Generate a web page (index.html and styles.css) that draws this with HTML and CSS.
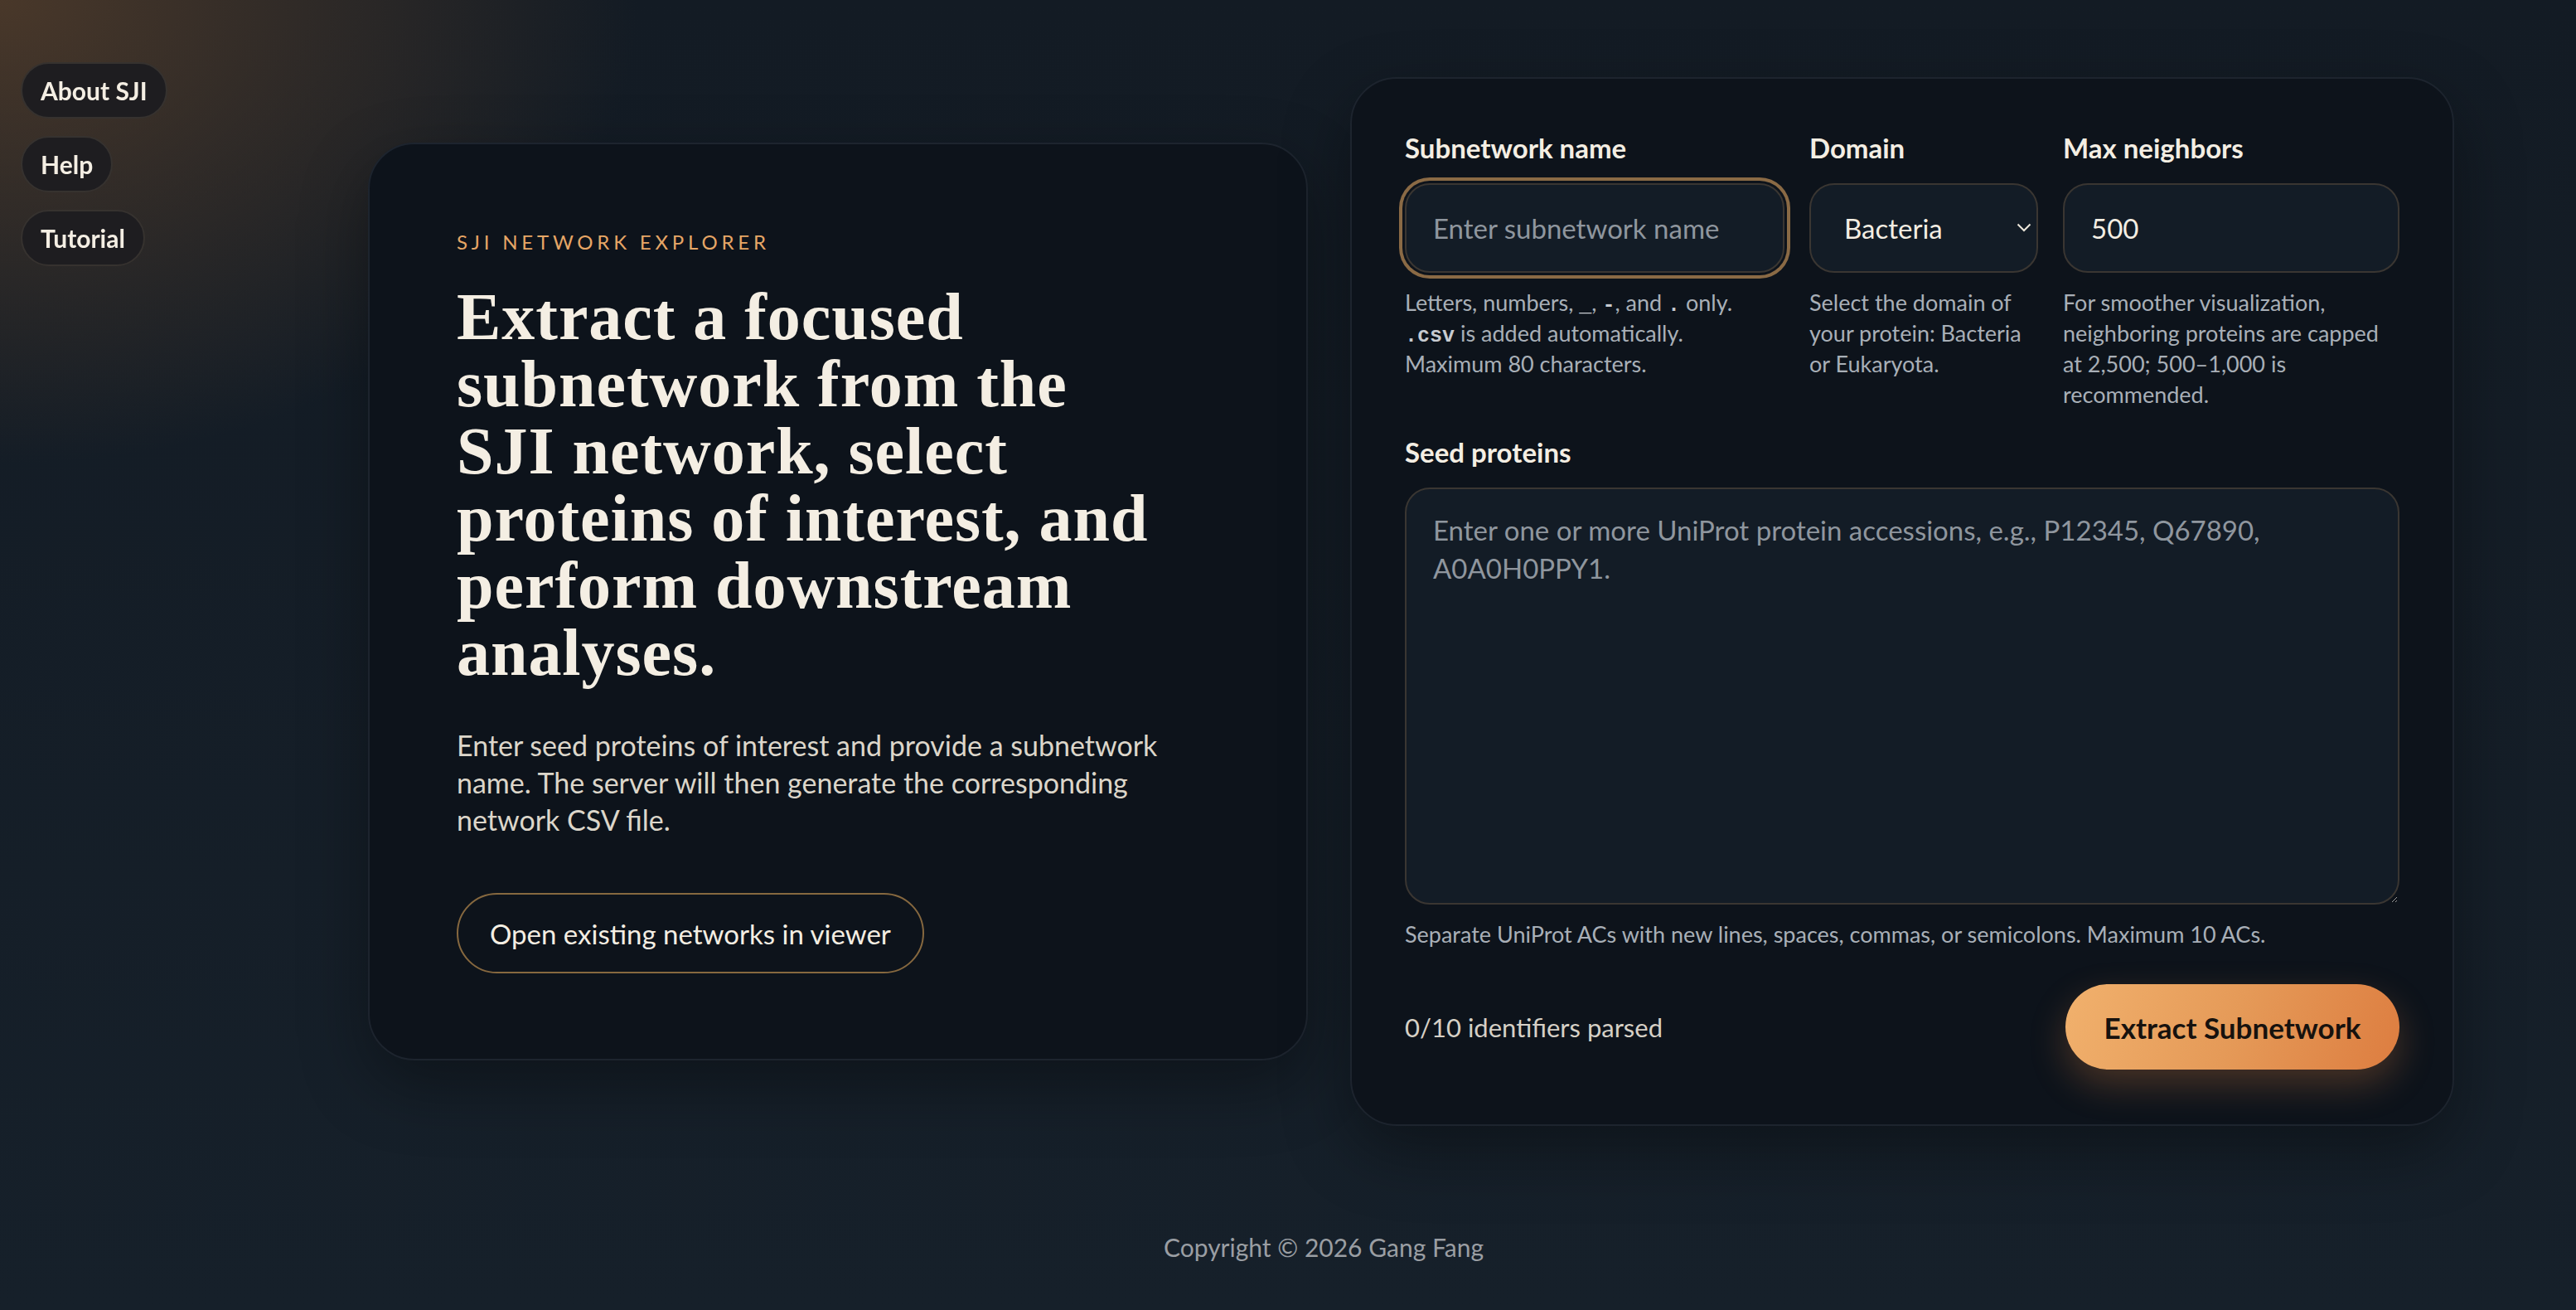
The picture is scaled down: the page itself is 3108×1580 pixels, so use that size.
FILE: index.html
```html
<!DOCTYPE html>
<html lang="en">
<head>
    <meta charset="UTF-8">
    <meta name="viewport" content="width=device-width, initial-scale=1.0">
    <title>SJI Network Explorer</title>
    <link rel="stylesheet" href="styles.css">
</head>
<body>

    <nav class="side-nav">
        <a class="nav-pill" href="#">About SJI</a>
        <a class="nav-pill" href="#">Help</a>
        <a class="nav-pill" href="#">Tutorial</a>
    </nav>

    <main class="layout">
        <section class="intro-card">
            <p class="eyebrow">SJI Network Explorer</p>
            <h1 class="headline">Extract a focused<br>subnetwork from the<br>SJI network, select<br>proteins of interest, and<br>perform downstream<br>analyses.</h1>
            <p class="lead">Enter seed proteins of interest and provide a subnetwork name. The server will then generate the corresponding network CSV file.</p>
            <a class="ghost-btn" href="#">Open existing networks in viewer</a>
        </section>

        <form class="form-card" onsubmit="return false">
            <div class="field-row">
                <div class="field">
                    <label for="netName">Subnetwork name</label>
                    <input type="text" id="netName" class="text-input is-focused" placeholder="Enter subnetwork name">
                    <p class="hint">Letters, numbers, <code>_</code>, <code>-</code>, and <code>.</code> only. <code>.csv</code> is added automatically. Maximum 80 characters.</p>
                </div>
                <div class="field">
                    <label for="domain">Domain</label>
                    <div class="select-wrap">
                        <select id="domain" class="text-input">
                            <option>Bacteria</option>
                            <option>Eukaryota</option>
                        </select>
                        <svg class="chevron" width="18" height="11" viewBox="0 0 18 11"><path d="M1.5 1.5 L9 9 L16.5 1.5" fill="none" stroke="#ece6da" stroke-width="2"/></svg>
                    </div>
                    <p class="hint">Select the domain of your protein: Bacteria or Eukaryota.</p>
                </div>
                <div class="field">
                    <label for="maxN">Max neighbors</label>
                    <input type="text" id="maxN" class="text-input" value="500">
                    <p class="hint">For smoother visualization, neighboring proteins are capped at 2,500; 500–1,000 is recommended.</p>
                </div>
            </div>

            <div class="field seed-field">
                <label for="seeds">Seed proteins</label>
                <textarea id="seeds" class="text-input seed-input" placeholder="Enter one or more UniProt protein accessions, e.g., P12345, Q67890, A0A0H0PPY1."></textarea>
                <p class="hint">Separate UniProt ACs with new lines, spaces, commas, or semicolons. Maximum 10 ACs.</p>
            </div>

            <div class="form-footer">
                <span class="parse-count">0/10 identifiers parsed</span>
                <button type="submit" class="primary-btn">Extract Subnetwork</button>
            </div>
        </form>
    </main>

    <footer class="page-footer">Copyright © 2026 Gang Fang</footer>

</body>
</html>
```

FILE: styles.css
```css
body {
    margin: 0;
    min-height: 100vh;
    font-family: Lato, "Noto Sans", sans-serif;
    color: #f4eee3;
    background:
        radial-gradient(1100px 800px at 0 0, rgba(96, 68, 44, 0.7), rgba(96, 68, 44, 0) 70%),
        linear-gradient(180deg, #131b24 0%, #16202a 100%);
}

.side-nav {
    position: fixed;
    top: 75px;
    left: 25px;
    display: flex;
    flex-direction: column;
    align-items: flex-start;
    gap: 21px;
}

.nav-pill {
    display: flex;
    align-items: center;
    height: 64px;
    padding: 0 22px;
    border: 2px solid #36322f;
    border-radius: 999px;
    background-color: #1e1d20;
    color: #f4eee3;
    font-size: 30px;
    font-weight: 700;
    text-decoration: none;
}

.layout {
    display: grid;
    grid-template-columns: 1134px 1332px;
    gap: 51px;
    align-items: center;
    padding: 93px 147px 0 444px;
}

.intro-card,
.form-card {
    background-color: #0d131b;
    border: 2px solid #1d242e;
    border-radius: 56px;
    box-shadow: 0 30px 80px rgba(0, 0, 0, 0.35);
}

.intro-card {
    padding: 103px 105px 103px 105px;
}

.eyebrow {
    margin: 0;
    font-size: 24px;
    line-height: 30px;
    letter-spacing: 0.2em;
    text-transform: uppercase;
    color: #e6a666;
}

.headline {
    margin: 35px 0 0;
    font-family: "Liberation Serif", serif;
    font-size: 80px;
    line-height: 81px;
    font-weight: 700;
    letter-spacing: 0.012em;
    color: #f4eee3;
}

.lead {
    margin: 48px 0 0;
    max-width: 900px;
    font-size: 34px;
    line-height: 45px;
    color: #dcd6ca;
}

.ghost-btn {
    display: inline-flex;
    align-items: center;
    height: 93px;
    margin-top: 66px;
    padding: 0 38px;
    border: 2px solid #86683f;
    border-radius: 999px;
    color: #f4eee3;
    font-size: 33px;
    text-decoration: none;
}

.form-card {
    padding: 63px 64px 66px;
}

.field-row {
    display: grid;
    grid-template-columns: 458px 276px 1fr;
    gap: 30px;
}

.field {
    display: flex;
    flex-direction: column;
}

.field label {
    font-size: 33px;
    line-height: 40px;
    font-weight: 700;
    color: #f4eee3;
    margin-bottom: 23px;
}

.text-input {
    box-sizing: border-box;
    height: 108px;
    width: 100%;
    padding: 0 32px;
    border: 2px solid #3a3632;
    border-radius: 30px;
    background-color: #131c26;
    color: #f4eee3;
    font-family: Lato, "Noto Sans", sans-serif;
    font-size: 33px;
    outline: none;
}

.text-input::placeholder {
    color: #8f969e;
}

.is-focused {
    box-shadow: 0 0 0 3px #0d131b, 0 0 0 7px #8a6a45;
}

.select-wrap {
    position: relative;
}

.select-wrap select {
    appearance: none;
    padding-left: 40px;
}

.chevron {
    position: absolute;
    right: 8px;
    top: 48px;
    width: 18px;
    height: 11px;
}

.hint {
    margin: 17px 0 0;
    font-size: 27px;
    line-height: 37px;
    color: #a8afb7;
}

.hint code {
    font-family: "Liberation Mono", monospace;
    font-size: 25px;
    line-height: 1;
    font-weight: 700;
    color: #c7cbd0;
}

.seed-field {
    margin-top: 31px;
}

.seed-input {
    height: 503px;
    padding: 26px 32px;
    line-height: 46px;
    resize: vertical;
}

.form-footer {
    display: flex;
    align-items: center;
    justify-content: space-between;
    margin-top: 42px;
}

.parse-count {
    font-size: 31px;
    color: #d6d0c6;
}

.primary-btn {
    height: 103px;
    width: 403px;
    border: none;
    border-radius: 999px;
    background: linear-gradient(110deg, #f1b16d 0%, #e59a58 50%, #dd7d40 100%);
    color: #17120e;
    font-family: Lato, "Noto Sans", sans-serif;
    font-size: 35px;
    font-weight: 700;
    box-shadow: 0 18px 44px rgba(226, 132, 66, 0.28);
    cursor: pointer;
}

.page-footer {
    margin-top: 128px;
    padding: 0 0 50px 86px;
    text-align: center;
    font-size: 30px;
    color: #9a9ea3;
}
```
